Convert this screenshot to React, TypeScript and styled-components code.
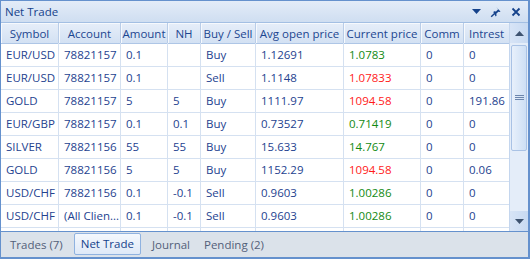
import React from "react";
import styled, { createGlobalStyle } from "styled-components";

const Global = createGlobalStyle`
  html, body { margin: 0; padding: 0; background: #fff; }
  body { font-family: "Open Sans", "Noto Sans", sans-serif; }
`;

const Panel = styled.div`
  width: 530px;
  height: 259px;
  box-sizing: border-box;
  border: 1px solid #6591cd;
  border-bottom-width: 2px;
  border-right-width: 2px;
  display: flex;
  flex-direction: column;
  background: #fff;
  overflow: hidden;
`;

const TitleBar = styled.div`
  height: 21px;
  flex: none;
  display: flex;
  align-items: center;
  padding: 0 6px 0 4px;
  background: linear-gradient(#e3ecf8, #cfdef1);
  border-bottom: 1px solid #a3bfe3;
  color: #15428b;
  font-size: 11.5px;
`;

const Title = styled.div`
  flex: 1;
`;

const TitleButtons = styled.div`
  display: flex;
  align-items: center;
  gap: 8px;
`;

const TitleBtn = styled.span`
  width: 12px;
  height: 12px;
  display: flex;
  align-items: center;
  justify-content: center;
`;

const Body = styled.div`
  flex: 1;
  display: flex;
  min-height: 0;
  border-bottom: 1px solid #6591cd;
`;

const Grid = styled.div`
  display: grid;
  grid-template-columns: 58px 62px 47px 33px 55px 88px 77px 43px 46px;
  grid-auto-rows: 23px;
  align-content: start;
  width: 509px;
  overflow: hidden;
  font-size: 11.5px;
`;

const HeaderCell = styled.div`
  height: 20px;
  display: flex;
  align-items: center;
  justify-content: center;
  background: linear-gradient(#e6eef9, #d3e1f3);
  border-right: 1px solid #b9cde8;
  border-bottom: 1px solid #aec6e6;
  box-shadow: inset 1px 1px 0 #f6f9fd;
  color: #1c4690;
  white-space: nowrap;
  overflow: hidden;
`;

const Cell = styled.div<{ $color?: string }>`
  display: flex;
  align-items: center;
  padding-left: 5px;
  border-right: 1px solid #d5e1f1;
  border-bottom: 1px solid #d5e1f1;
  color: ${(p) => p.$color || "#24428f"};
  white-space: nowrap;
  overflow: hidden;
  margin-top: -3px;
  height: 23px;
`;

const ScrollBar = styled.div`
  width: 18px;
  flex: none;
  display: flex;
  flex-direction: column;
  background: #dce8f7;
  border-left: 1px solid #c4d6ee;
`;

const ScrollBtn = styled.div`
  height: 20px;
  display: flex;
  align-items: center;
  justify-content: center;
  background: linear-gradient(90deg, #d7e4f6, #c8daf2);
`;

const Track = styled.div`
  flex: 1;
  display: flex;
  flex-direction: column;
  padding: 2px 1px;
  background: #e4edf9;
`;

const Thumb = styled.div`
  height: 106px;
  box-sizing: border-box;
  border: 1px solid #a9c2e5;
  border-radius: 2px;
  background: linear-gradient(90deg, #e8f0fb, #cddff5);
  display: flex;
  align-items: center;
  justify-content: center;
`;

const TabStrip = styled.div`
  height: 25px;
  flex: none;
  background: #dbe2ea;
  display: flex;
  align-items: center;
  padding-left: 2px;
  font-size: 11.5px;
`;

const Tab = styled.div<{ $active?: boolean }>`
  height: 22px;
  box-sizing: border-box;
  display: flex;
  align-items: center;
  padding: 0 6px;
  margin: ${(p) => (p.$active ? "-2px 4px 0" : "0")};
  color: ${(p) => (p.$active ? "#15428b" : "#536079")};
  border: 1px solid ${(p) => (p.$active ? "#8fb2e0" : "transparent")};
  border-radius: 2px;
  background: ${(p) => (p.$active ? "linear-gradient(#f4f8fd, #dfe9f7)" : "transparent")};
`;

const headers = ["Symbol", "Account", "Amount", "NH", "Buy / Sell", "Avg open price", "Current price", "Comm", "Intrest"];

const G = "#128a12";
const R = "#ff1a1a";

type Row = { c: string[]; cur: string };
const rows: Row[] = [
  { c: ["EUR/USD", "78821157", "0.1", "", "Buy", "1.12691", "1.0783", "0", "0"], cur: G },
  { c: ["EUR/USD", "78821157", "0.1", "", "Sell", "1.1148", "1.07833", "0", "0"], cur: R },
  { c: ["GOLD", "78821157", "5", "5", "Buy", "1111.97", "1094.58", "0", "191.86"], cur: R },
  { c: ["EUR/GBP", "78821157", "0.1", "0.1", "Buy", "0.73527", "0.71419", "0", "0"], cur: G },
  { c: ["SILVER", "78821156", "55", "55", "Buy", "15.633", "14.767", "0", "0"], cur: G },
  { c: ["GOLD", "78821156", "5", "5", "Buy", "1152.29", "1094.58", "0", "0.06"], cur: R },
  { c: ["USD/CHF", "78821156", "0.1", "-0.1", "Sell", "0.9603", "1.00286", "0", "0"], cur: G },
  { c: ["USD/CHF", "(All Clien...", "0.1", "-0.1", "Sell", "0.9603", "1.00286", "0", "0"], cur: G },
  { c: ["", "", "", "", "", "", "", "", ""], cur: G },
];

export default function App() {
  return (
    <>
      <Global />
      <Panel>
        <TitleBar>
          <Title>Net Trade</Title>
          <TitleButtons>
            <TitleBtn>
              <svg width="9" height="5" viewBox="0 0 9 5"><path d="M0 0h9L4.5 5z" fill="#15428b" /></svg>
            </TitleBtn>
            <TitleBtn>
              <svg width="12" height="12" viewBox="0 0 12 12">
                <path d="M6.5 1.5l4 4-1 .6-1.2-.4-2 2 .3 1.8-.9.9L3.3 6.1l.9-.9 1.8.3 2-2-.4-1.2z" fill="#15428b" />
                <path d="M4.6 7.4L1.2 10.8" stroke="#15428b" strokeWidth="1.4" />
              </svg>
            </TitleBtn>
            <TitleBtn>
              <svg width="10" height="10" viewBox="0 0 10 10">
                <path d="M1.5 1.5l7 7M8.5 1.5l-7 7" stroke="#15428b" strokeWidth="1.8" />
              </svg>
            </TitleBtn>
          </TitleButtons>
        </TitleBar>
        <Body>
          <Grid>
            {headers.map((h) => (
              <HeaderCell key={h}>{h}</HeaderCell>
            ))}
            {rows.map((r, i) =>
              r.c.map((v, j) => (
                <Cell key={i + "-" + j} $color={j === 6 ? r.cur : undefined}>
                  {v}
                </Cell>
              ))
            )}
          </Grid>
          <ScrollBar>
            <ScrollBtn>
              <svg width="9" height="5" viewBox="0 0 9 5"><path d="M0 5h9L4.5 0z" fill="#3e5370" /></svg>
            </ScrollBtn>
            <Track>
              <Thumb>
                <svg width="9" height="6" viewBox="0 0 9 6">
                  <path d="M0 .5h9M0 2.5h9M0 4.5h9" stroke="#6c86ad" strokeWidth="1" />
                </svg>
              </Thumb>
            </Track>
            <ScrollBtn>
              <svg width="9" height="5" viewBox="0 0 9 5"><path d="M0 0h9L4.5 5z" fill="#3e5370" /></svg>
            </ScrollBtn>
          </ScrollBar>
        </Body>
        <TabStrip>
          <Tab>Trades (7)</Tab>
          <Tab $active>Net Trade</Tab>
          <Tab>Journal</Tab>
          <Tab>Pending (2)</Tab>
        </TabStrip>
      </Panel>
    </>
  );
}
